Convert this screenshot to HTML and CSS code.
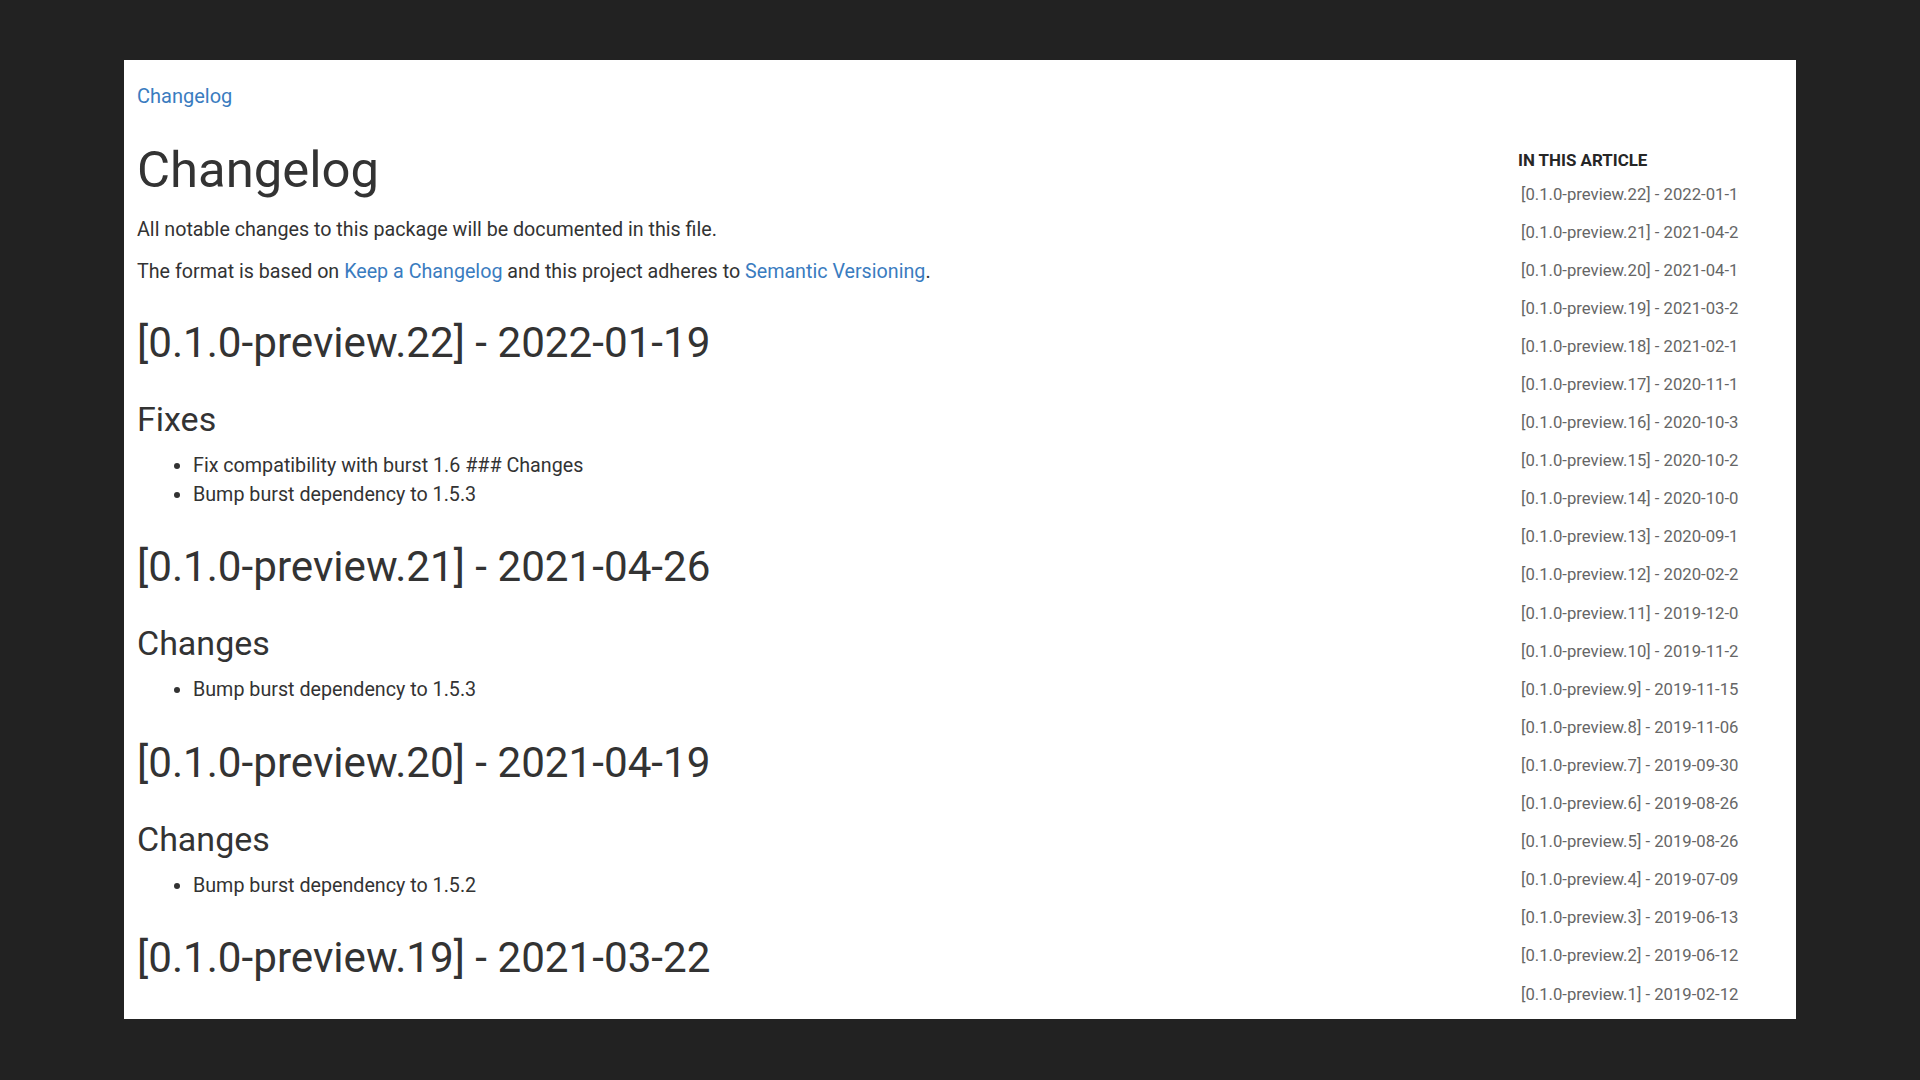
FILE: index.html
```html
<!DOCTYPE html>
<html lang="en">
<head>
<meta charset="utf-8">
<title>Changelog</title>
<link rel="stylesheet" href="styles.css">
</head>
<body>
<div class="stage">
  <div class="panel">
    <main class="article">
      <a class="crumb" href="#">Changelog</a>
      <h1 class="title">Changelog</h1>
      <p class="para">All notable changes to this package will be documented in this file.</p>
      <p class="para para-2">The format is based on <a class="link" href="#">Keep a Changelog</a> and this project adheres to <a class="link" href="#">Semantic Versioning</a>.</p>

      <h2 class="version version-first">[0.1.0-preview.22] - 2022-01-19</h2>
      <h3 class="sub">Fixes</h3>
      <ul class="items">
        <li>Fix compatibility with burst 1.6 ### Changes</li>
        <li>Bump burst dependency to 1.5.3</li>
      </ul>

      <h2 class="version">[0.1.0-preview.21] - 2021-04-26</h2>
      <h3 class="sub">Changes</h3>
      <ul class="items">
        <li>Bump burst dependency to 1.5.3</li>
      </ul>

      <h2 class="version">[0.1.0-preview.20] - 2021-04-19</h2>
      <h3 class="sub">Changes</h3>
      <ul class="items">
        <li>Bump burst dependency to 1.5.2</li>
      </ul>

      <h2 class="version">[0.1.0-preview.19] - 2021-03-22</h2>
    </main>
    <aside class="toc">
      <div class="toc-head">IN THIS ARTICLE</div>
      <ul class="toc-list">
        <li class="toc-item">[0.1.0-preview.22] - 2022-01-19</li>
        <li class="toc-item">[0.1.0-preview.21] - 2021-04-26</li>
        <li class="toc-item">[0.1.0-preview.20] - 2021-04-19</li>
        <li class="toc-item">[0.1.0-preview.19] - 2021-03-22</li>
        <li class="toc-item">[0.1.0-preview.18] - 2021-02-17</li>
        <li class="toc-item">[0.1.0-preview.17] - 2020-11-13</li>
        <li class="toc-item">[0.1.0-preview.16] - 2020-10-30</li>
        <li class="toc-item">[0.1.0-preview.15] - 2020-10-21</li>
        <li class="toc-item">[0.1.0-preview.14] - 2020-10-07</li>
        <li class="toc-item">[0.1.0-preview.13] - 2020-09-18</li>
        <li class="toc-item">[0.1.0-preview.12] - 2020-02-21</li>
        <li class="toc-item">[0.1.0-preview.11] - 2019-12-04</li>
        <li class="toc-item">[0.1.0-preview.10] - 2019-11-22</li>
        <li class="toc-item">[0.1.0-preview.9] - 2019-11-15</li>
        <li class="toc-item">[0.1.0-preview.8] - 2019-11-06</li>
        <li class="toc-item">[0.1.0-preview.7] - 2019-09-30</li>
        <li class="toc-item">[0.1.0-preview.6] - 2019-08-26</li>
        <li class="toc-item">[0.1.0-preview.5] - 2019-08-26</li>
        <li class="toc-item">[0.1.0-preview.4] - 2019-07-09</li>
        <li class="toc-item">[0.1.0-preview.3] - 2019-06-13</li>
        <li class="toc-item">[0.1.0-preview.2] - 2019-06-12</li>
        <li class="toc-item">[0.1.0-preview.1] - 2019-02-12</li>
      </ul>
    </aside>
  </div>
</div>
</body>
</html>
```

FILE: styles.css
```css
html, body {
  margin: 0;
  padding: 0;
  background: #222222;
}

body {
  font-family: Roboto, "Liberation Sans", Arial, sans-serif;
  color: #333333;
}

.stage {
  width: 1920px;
  height: 1080px;
  padding: 60px 0 0 124px;
  box-sizing: border-box;
}

.panel {
  width: 1672px;
  height: 959px;
  background: #ffffff;
  display: flex;
  overflow: hidden;
}

.article {
  flex: 1;
  padding: 24px 0 0 13px;
  min-width: 0;
}

.crumb {
  display: block;
  font-size: 20px;
  line-height: 24px;
  color: #3a7cbf;
  text-decoration: none;
}

.title {
  margin: 32px 0 0;
  font-size: 50.8px;
  line-height: 60px;
  font-weight: 400;
  color: #333333;
}

.para {
  margin: 16px 0 0;
  font-size: 19.7px;
  line-height: 28px;
}

.para-2 {
  margin-top: 14px;
}

.link {
  color: #3a7cbf;
  text-decoration: none;
}

.version {
  margin: 33px 0 0;
  font-size: 42.2px;
  line-height: 50px;
  font-weight: 400;
  color: #333333;
}

.version-first {
  margin-top: 32px;
}

.sub {
  margin: 31px 0 0;
  font-size: 34px;
  line-height: 40px;
  font-weight: 400;
  color: #333333;
}

.items {
  margin: 13px 0 0;
  padding: 0 0 0 56px;
  font-size: 19.7px;
  line-height: 28.5px;
}

.toc {
  width: 221px;
  margin-right: 57px;
  padding-top: 90px;
  overflow: hidden;
  white-space: nowrap;
}

.toc-head {
  font-size: 16.9px;
  line-height: 20px;
  font-weight: 700;
  color: #262626;
}

.toc-list {
  list-style: none;
  margin: 5.5px 0 0;
  padding: 0 0 0 3px;
}

.toc-item {
  font-size: 16.7px;
  line-height: 20px;
  padding: 9.05px 0;
  color: #666666;
}
```
